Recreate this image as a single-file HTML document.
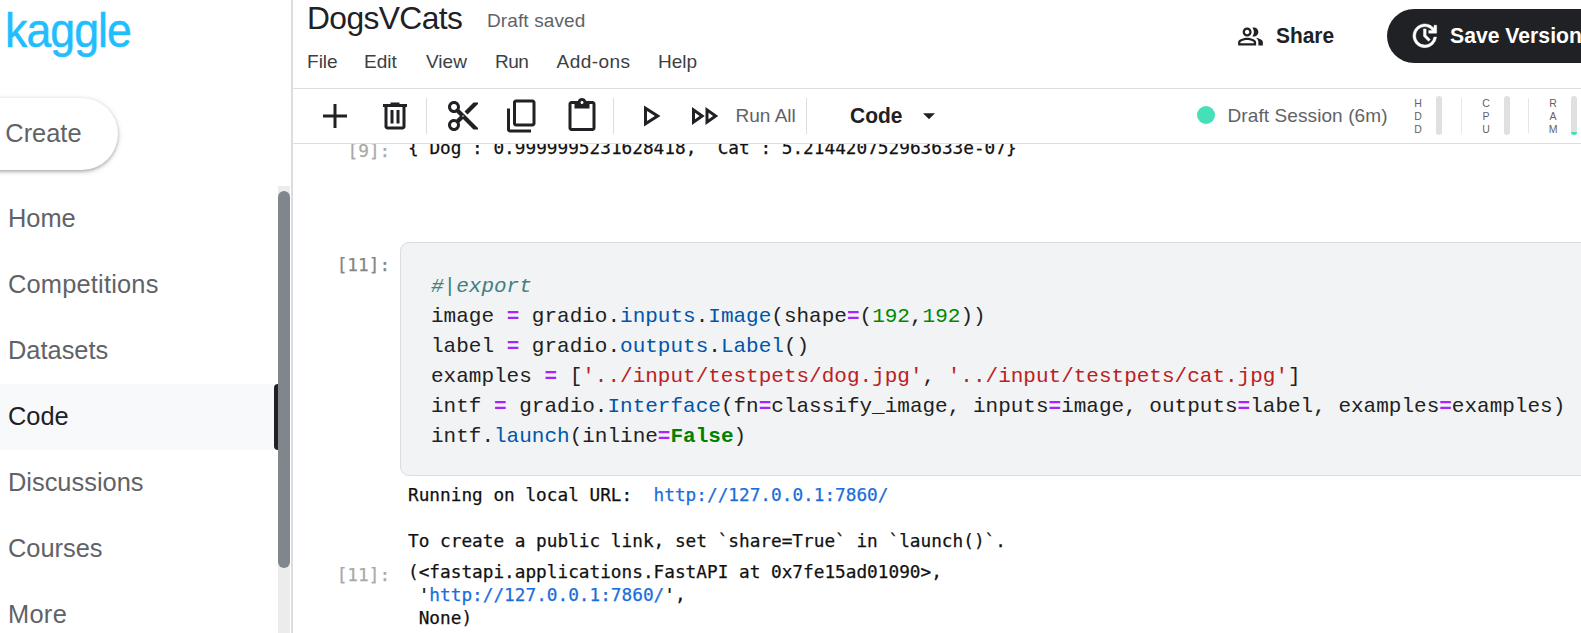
<!DOCTYPE html>
<html lang="en">
<head>
<meta charset="utf-8">
<title>DogsVCats | Kaggle</title>
<style>
*{box-sizing:border-box;margin:0;padding:0}
html,body{width:1581px;height:633px;overflow:hidden;background:#fff}
body{position:relative;font-family:"Liberation Sans",Arial,sans-serif;color:#202124}
.abs{position:absolute;white-space:nowrap}
/* ---------- sidebar ---------- */
#sidebar{position:absolute;left:0;top:0;width:291px;height:633px;background:#fff}
#logo{left:4.8px;top:0.8px;font-size:48px;line-height:60px;color:#20beff;letter-spacing:-1px;transform:scaleX(.93);transform-origin:0 0;-webkit-text-stroke:.5px #20beff}
#create{position:absolute;left:-40px;top:98px;width:158px;height:72px;border-radius:36px;background:#fff;
  box-shadow:0 1.5px 3px rgba(60,64,67,.3),0 1.5px 4.5px 1.5px rgba(60,64,67,.15)}
#create span{position:absolute;left:45.3px;top:21px;font-size:25.4px;line-height:28px;color:#5f6368;letter-spacing:0px}
.nav{position:absolute;left:0;width:274px;height:66px;font-size:25.4px;line-height:64px;padding-left:8px;color:#5f6368;white-space:nowrap}
.nav.active{background:#f8f9fa;color:#202124}
#navbar{position:absolute;left:274px;top:384px;width:4px;height:66px;background:#202124;border-radius:4px 0 0 4px}
#strack{position:absolute;left:278px;top:186px;width:12px;height:447px;background:#ececec}
#sthumb{position:absolute;left:278px;top:191px;width:12px;height:377px;background:#80868b;border-radius:6px}
#vline{position:absolute;left:291px;top:0;width:2px;height:633px;background:#dadce0}
/* ---------- header ---------- */
#main{position:absolute;left:293px;top:0;width:1288px;height:633px;overflow:hidden}
#title{left:307px;top:-1px;font-size:31.75px;line-height:38px;color:#202124;letter-spacing:-.6px}
#saved{left:487px;top:10px;font-size:19.05px;line-height:22px;color:#5f6368;letter-spacing:.1px}
.menu{top:51px;font-size:19.05px;line-height:22px;color:#3c4043}
#hline1{position:absolute;left:293px;top:88px;width:1288px;height:1px;background:#dcdfe2}
#hline2{position:absolute;left:293px;top:143px;width:1288px;height:1px;background:#dcdfe2}
#share{left:1276px;top:23px;font-size:22.2px;line-height:26px;font-weight:bold;color:#202124;transform:scaleX(.942);transform-origin:0 0}
#savebtn{position:absolute;left:1387px;top:9px;width:260px;height:54px;border-radius:27px;background:#202124}
#savetxt{left:1449.5px;top:23px;font-size:22.2px;line-height:26px;font-weight:bold;color:#fff;transform:scaleX(.955);transform-origin:0 0}
/* ---------- toolbar ---------- */
.tdiv{position:absolute;top:98px;width:1px;height:36px;background:#dadce0}
.ticon{position:absolute;width:36px;height:36px}
#runall{left:735.5px;top:105px;font-size:19.05px;line-height:22px;color:#5f6368;letter-spacing:0px}
#codesel{left:849.5px;top:103px;font-size:22.2px;line-height:26px;font-weight:bold;color:#202124;transform:scaleX(.945);transform-origin:0 0}
#dot{position:absolute;left:1197px;top:106px;width:18px;height:18px;border-radius:9px;background:#45e0b8}
#session{left:1227.5px;top:105px;font-size:19.05px;line-height:22px;color:#5f6368;letter-spacing:.08px}
.res{position:absolute;top:97px;width:16px;font-size:10.5px;line-height:13.1px;text-align:center;color:#5f6368}
.bar{position:absolute;top:96px;width:6px;height:39px;border-radius:3px;background:#e0e0e0;overflow:hidden}
.rdiv{position:absolute;top:98px;width:1px;height:35px;background:#e4e6e9}
/* ---------- notebook ---------- */
#nb{position:absolute;left:293px;top:144.5px;width:1288px;height:489px;overflow:hidden}
.mono{white-space:pre;-webkit-text-stroke:.25px;font-family:"DejaVu Sans Mono","Liberation Mono",monospace;font-size:17.74px;line-height:23px;color:#111}
.prompt{color:#858585}
.po{color:#a8a8a8}
.q{opacity:0}
.out .lnk{color:#1a6ddc}
#cell{position:absolute;left:400px;top:242px;width:1300px;height:233.5px;border:1.5px solid #dadce0;border-radius:9px;background:#f1f3f4}
#code{position:absolute;left:431px;top:272px;font-family:"Liberation Mono","DejaVu Sans Mono",monospace;font-size:21px;line-height:30px;color:#212121;white-space:pre}
#code .c{color:#408080;font-style:italic}
#code .o{color:#aa22ff;font-weight:bold}
#code .n{color:#008800}
#code .s{color:#ba2121}
#code .p{color:#0055aa}
#code .k{color:#008000;font-weight:bold}
</style>
</head>
<body>
<!-- ================= SIDEBAR ================= -->
<div id="sidebar">
  <div id="logo" class="abs">kaggle</div>
  <div id="create"><span>Create</span></div>
  <div class="nav" style="top:186px;letter-spacing:0px" id="n1">Home</div>
  <div class="nav" style="top:252px;letter-spacing:.2px" id="n2">Competitions</div>
  <div class="nav" style="top:318px;letter-spacing:0px" id="n3">Datasets</div>
  <div class="nav active" style="top:384px;letter-spacing:0px" id="n4">Code</div>
  <div class="nav" style="top:450px;letter-spacing:0px" id="n5">Discussions</div>
  <div class="nav" style="top:516px;letter-spacing:0px" id="n6">Courses</div>
  <div class="nav" style="top:582px;letter-spacing:.3px" id="n7">More</div>
  <div id="navbar"></div>
  <div id="strack"></div>
  <div id="sthumb"></div>
</div>
<div id="vline"></div>

<!-- ================= NOTEBOOK ================= -->
<div id="nbwrap">
  <div id="p9" class="abs mono prompt po" style="left:347.6px;top:139.5px">[9]:</div>
  <div id="o9" class="abs mono out" style="left:408px;top:137px">{<span class="q">'</span>Dog<span class="q">'</span>: 0.9999995231628418, <span class="q">'</span>Cat<span class="q">'</span>: 5.214420752963633e-07}</div>

  <div id="p11" class="abs mono prompt" style="left:336.7px;top:254px">[11]:</div>
  <div id="cell"></div>
<pre id="code"><span class="c">#|export</span>
image <span class="o">=</span> gradio.<span class="p">inputs</span>.<span class="p">Image</span>(shape<span class="o">=</span>(<span class="n">192</span>,<span class="n">192</span>))
label <span class="o">=</span> gradio.<span class="p">outputs</span>.<span class="p">Label</span>()
examples <span class="o">=</span> [<span class="s">'../input/testpets/dog.jpg'</span>, <span class="s">'../input/testpets/cat.jpg'</span>]
intf <span class="o">=</span> gradio.<span class="p">Interface</span>(fn<span class="o">=</span>classify_image, inputs<span class="o">=</span>image, outputs<span class="o">=</span>label, examples<span class="o">=</span>examples)
intf.<span class="p">launch</span>(inline<span class="o">=</span><span class="k">False</span>)</pre>

  <div id="o1" class="abs mono out" style="left:408px;top:484px">Running on local URL:  <span class="lnk">http://127.0.0.1:7860/</span></div>
  <div id="o2" class="abs mono out" style="left:408px;top:530px">To create a public link, set `share=True` in `launch()`.</div>
  <div id="p11b" class="abs mono prompt po" style="left:336.7px;top:563.5px">[11]:</div>
  <div id="o3" class="abs mono out" style="left:408px;top:561px">(&lt;fastapi.applications.FastAPI at 0x7fe15ad01090&gt;,</div>
  <div id="o4" class="abs mono out" style="left:408px;top:584px">&nbsp;'<span class="lnk">http://127.0.0.1:7860/</span>',</div>
  <div id="o5" class="abs mono out" style="left:408px;top:607px">&nbsp;None)</div>
</div>

<!-- ================= HEADER ================= -->
<div id="header" style="position:absolute;left:293px;top:0;width:1288px;height:144px;background:#fff"></div>
<div id="title" class="abs">DogsVCats</div>
<div id="saved" class="abs">Draft saved</div>
<div id="m1" class="abs menu" style="left:307px;letter-spacing:0px">File</div>
<div id="m2" class="abs menu" style="left:364px;letter-spacing:0px">Edit</div>
<div id="m3" class="abs menu" style="left:426px;letter-spacing:0px">View</div>
<div id="m4" class="abs menu" style="left:495px;letter-spacing:-.5px">Run</div>
<div id="m5" class="abs menu" style="left:556.5px;letter-spacing:.45px">Add-ons</div>
<div id="m6" class="abs menu" style="left:658px;letter-spacing:0px">Help</div>
<div id="share" class="abs">Share</div>
<div id="savebtn"></div>
<div id="savetxt" class="abs">Save Version</div>
<div id="hline1"></div>
<div id="hline2"></div>

<!-- ================= TOOLBAR ================= -->
<div class="tdiv" style="left:426px"></div>
<div class="tdiv" style="left:613px"></div>
<div class="tdiv" style="left:806px"></div>

<svg class="ticon" id="i_add" style="left:317px;top:98px" viewBox="0 0 24 24"><path fill="#202124" d="M11 4h2v7h7v2h-7v7h-2v-7H4v-2h7z"/></svg>
<svg class="ticon" id="i_del" style="left:377.2px;top:98px" viewBox="0 -960 960 960"><path fill="#202124" d="M280-120q-33 0-56.5-23.500T200-200v-520h-40v-80h200v-40h240v40h200v80h-40v520q0 33-23.500 56.500T680-120H280Zm400-600H280v520h400v-520ZM360-280h80v-360h-80v360Zm160 0h80v-360h-80v360ZM280-720v520-520Z"/></svg>
<svg class="ticon" id="i_cut" style="left:444.9px;top:98.2px" viewBox="0 0 24 24"><path fill="#202124" d="M9.640 7.640c.23-.5.36-1.050.36-1.640 0-2.210-1.790-4-4-4S2 3.790 2 6s1.790 4 4 4c.59 0 1.140-.13 1.640-.36L10 12l-2.360 2.360C7.140 14.130 6.590 14 6 14c-2.210 0-4 1.790-4 4s1.790 4 4 4 4-1.790 4-4c0-.59-.13-1.140-.36-1.640L12 14l7 7h3v-1L9.640 7.640zM6 8c-1.100 0-2-.89-2-2s.9-2 2-2 2 .89 2 2-.9 2-2 2zm0 12c-1.100 0-2-.89-2-2s.9-2 2-2 2 .89 2 2-.9 2-2 2zm6-7.500c-.28 0-.5-.22-.5-.5s.22-.5.5-.5.5.22.5.5-.22.5-.5.5zM19 3l-6 6 2 2 7-7V3z"/></svg>
<svg class="ticon" id="i_copy" style="left:504px;top:97.7px;transform:scaleY(-1)" viewBox="0 0 24 24"><path fill="#202124" d="M18 1H4c-1.100 0-2 .9-2 2v14h2V3h14V1zm3 4H8c-1.100 0-2 .9-2 2v14c0 1.100.9 2 2 2h11c1.100 0 2-.9 2-2V7c0-1.100-.9-2-2-2zm0 16H8V7h11v14z"/></svg>
<svg class="ticon" id="i_paste" style="left:564.3px;top:98.2px" viewBox="0 0 24 24"><path fill="#202124" d="M19 2h-4.180C14.400.84 13.300 0 12 0c-1.300 0-2.400.84-2.820 2H5c-1.100 0-2 .9-2 2v16c0 1.100.9 2 2 2h14c1.100 0 2-.9 2-2V4c0-1.100-.9-2-2-2zm-7 0c.55 0 1 .45 1 1s-.45 1-1 1-1-.45-1-1 .45-1 1-1zm7 18H5V4h2v3h10V4h2v16z"/></svg>
<svg class="ticon" id="i_play" style="left:631.7px;top:97.5px" viewBox="0 0 24 24"><path fill="#202124" d="M10 8.640L15.270 12 10 15.360V8.640M8 5v14l11-7L8 5z"/></svg>
<svg class="ticon" id="i_ff" style="left:685.5px;top:97.6px" viewBox="0 0 24 24"><path fill="#202124" d="M15 9.860L18.030 12 15 14.140V9.860m-9 0L9.030 12 6 14.140V9.860M13 6v12l8.500-6L13 6zM4 6v12l8.500-6L4 6z"/></svg>
<svg id="i_dd" style="position:absolute;left:923.2px;top:113px;width:12px;height:6.4px" viewBox="0 0 10 5"><path fill="#202124" d="M0 0l5 5 5-5z"/></svg>
<svg id="i_people" style="position:absolute;left:1236.8px;top:23.2px;width:27px;height:27px" viewBox="0 0 24 24"><path fill="#202124" d="M16.670 13.130C18.040 14.060 19 15.320 19 17v3h4v-3c0-2.180-3.570-3.470-6.330-3.870zM15 12c2.210 0 4-1.790 4-4s-1.790-4-4-4c-.47 0-.91.1-1.330.24C14.500 5.270 15 6.580 15 8s-.5 2.730-1.330 3.760c.42.14.86.24 1.330.24zM9 12c2.210 0 4-1.790 4-4s-1.790-4-4-4-4 1.790-4 4 1.790 4 4 4zm0-6c1.100 0 2 .9 2 2s-.9 2-2 2-2-.9-2-2 .9-2 2-2zm0 7c-2.670 0-8 1.340-8 4v3h16v-3c0-2.660-5.330-4-8-4zm6 5H3v-.99C3.200 16.290 6.300 15 9 15s5.800 1.290 6 2v1z"/></svg>
<svg id="i_update" style="position:absolute;left:1408.7px;top:20.3px;width:31.6px;height:31.6px" viewBox="0 -960 960 960"><path fill="#fff" stroke="#fff" stroke-width="14" d="M480-120q-75 0-140.500-28.500t-114-77q-48.500-48.500-77-114T120-480q0-75 28.500-140.500t77-114q48.500-48.500 114-77T480-840q82 0 155.500 35T760-706v-94h80v240H600v-80h110q-41-56-101-88t-129-32q-117 0-198.500 81.500T200-480q0 117 81.500 198.500T480-200q105 0 183.500-68T756-440h82q-15 137-117.500 228.500T480-120Zm112-192L440-464v-226h80v194l128 128-56 56Z"/></svg>
<div id="runall" class="abs">Run All</div>
<div id="codesel" class="abs">Code</div>
<div id="dot"></div>
<div id="session" class="abs">Draft Session (6m)</div>
<div class="res" style="left:1410px" id="hdd">H<br>D<br>D</div>
<div class="bar" style="left:1436px"></div>
<div class="rdiv" style="left:1461px"></div>
<div class="res" style="left:1478px" id="cpu">C<br>P<br>U</div>
<div class="bar" style="left:1504px"></div>
<div class="rdiv" style="left:1528px"></div>
<div class="res" style="left:1545px" id="ram">R<br>A<br>M</div>
<div class="bar" style="left:1571px"><div style="position:absolute;left:0;bottom:0;width:6px;height:3.2px;background:#45e0b8"></div></div>
</body>
</html>
